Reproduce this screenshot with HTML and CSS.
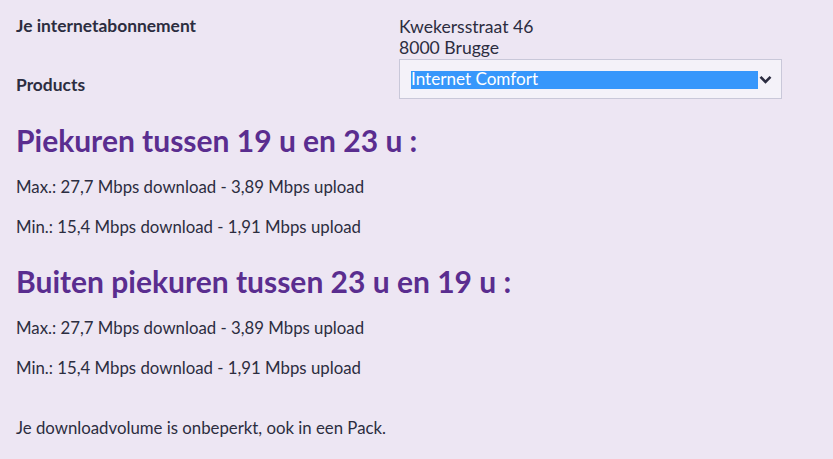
FILE: index.html
```html
<!DOCTYPE html>
<html lang="nl">
<head>
<meta charset="utf-8">
<title>Je internetabonnement</title>
<link rel="stylesheet" href="styles.css">
</head>
<body>
<div class="page">
  <div class="info">
    <div class="label">Je internetabonnement</div>
    <div class="address">Kwekersstraat 46<br>8000 Brugge</div>
    <div class="label label-products">Products</div>
    <div class="select">
      <span class="selected">Internet Comfort</span>
      <svg class="chevron" width="13" height="9" viewBox="0 0 13 9"><path d="M1.5 1.8 L6.5 6.8 L11.5 1.8" fill="none" stroke="#2b2c40" stroke-width="2.6"/></svg>
    </div>
  </div>
  <h2 class="heading h-first">Piekuren tussen 19 u en 23 u :</h2>
  <p class="line">Max.: 27,7 Mbps download - 3,89 Mbps upload</p>
  <p class="line">Min.: 15,4 Mbps download - 1,91 Mbps upload</p>
  <h2 class="heading h-second">Buiten piekuren tussen 23 u en 19 u :</h2>
  <p class="line">Max.: 27,7 Mbps download - 3,89 Mbps upload</p>
  <p class="line">Min.: 15,4 Mbps download - 1,91 Mbps upload</p>
  <p class="line note">Je downloadvolume is onbeperkt, ook in een Pack.</p>
</div>
</body>
</html>
```
FILE: styles.css
```css
html, body {
  margin: 0;
  padding: 0;
  background: #ede6f3;
}
body {
  font-family: Lato, "Noto Sans", sans-serif;
  color: #2c2d40;
  font-size: 17px;
  line-height: 20px;
}
.page {
  padding: 16px 16px 0 16px;
}
.info {
  display: grid;
  grid-template-columns: 383px 383px;
}
.label {
  font-weight: bold;
  font-size: 17.4px;
}
.address {
  font-size: 17.6px;
  line-height: 21px;
}
.label-products {
  padding-top: 17px;
}
.select {
  margin-top: 1px;
  height: 38px;
  border: 1px solid #c9c8d9;
  background: #f4f2f9;
  display: flex;
  align-items: center;
  padding: 0 9px 0 11px;
  gap: 1px;
}
.selected {
  flex: 1;
  background: #3797fb;
  color: #ffffff;
  font-size: 17.1px;
  height: 18px;
  line-height: 15px;
  margin-top: 1px;
}
.chevron {
  display: block;
  margin-top: 1px;
}
.heading {
  margin: 0;
  color: #5a2d8f;
  font-size: 30px;
  line-height: 32px;
  font-weight: bold;
}
.h-first {
  margin-top: 25px;
}
.h-second {
  margin-top: 28px;
}
.line {
  margin: 20px 0 0 0;
  font-size: 16.8px;
}
.h-first + .line,
.h-second + .line {
  margin-top: 21px;
}
.line.note {
  margin-top: 40px;
}
```
